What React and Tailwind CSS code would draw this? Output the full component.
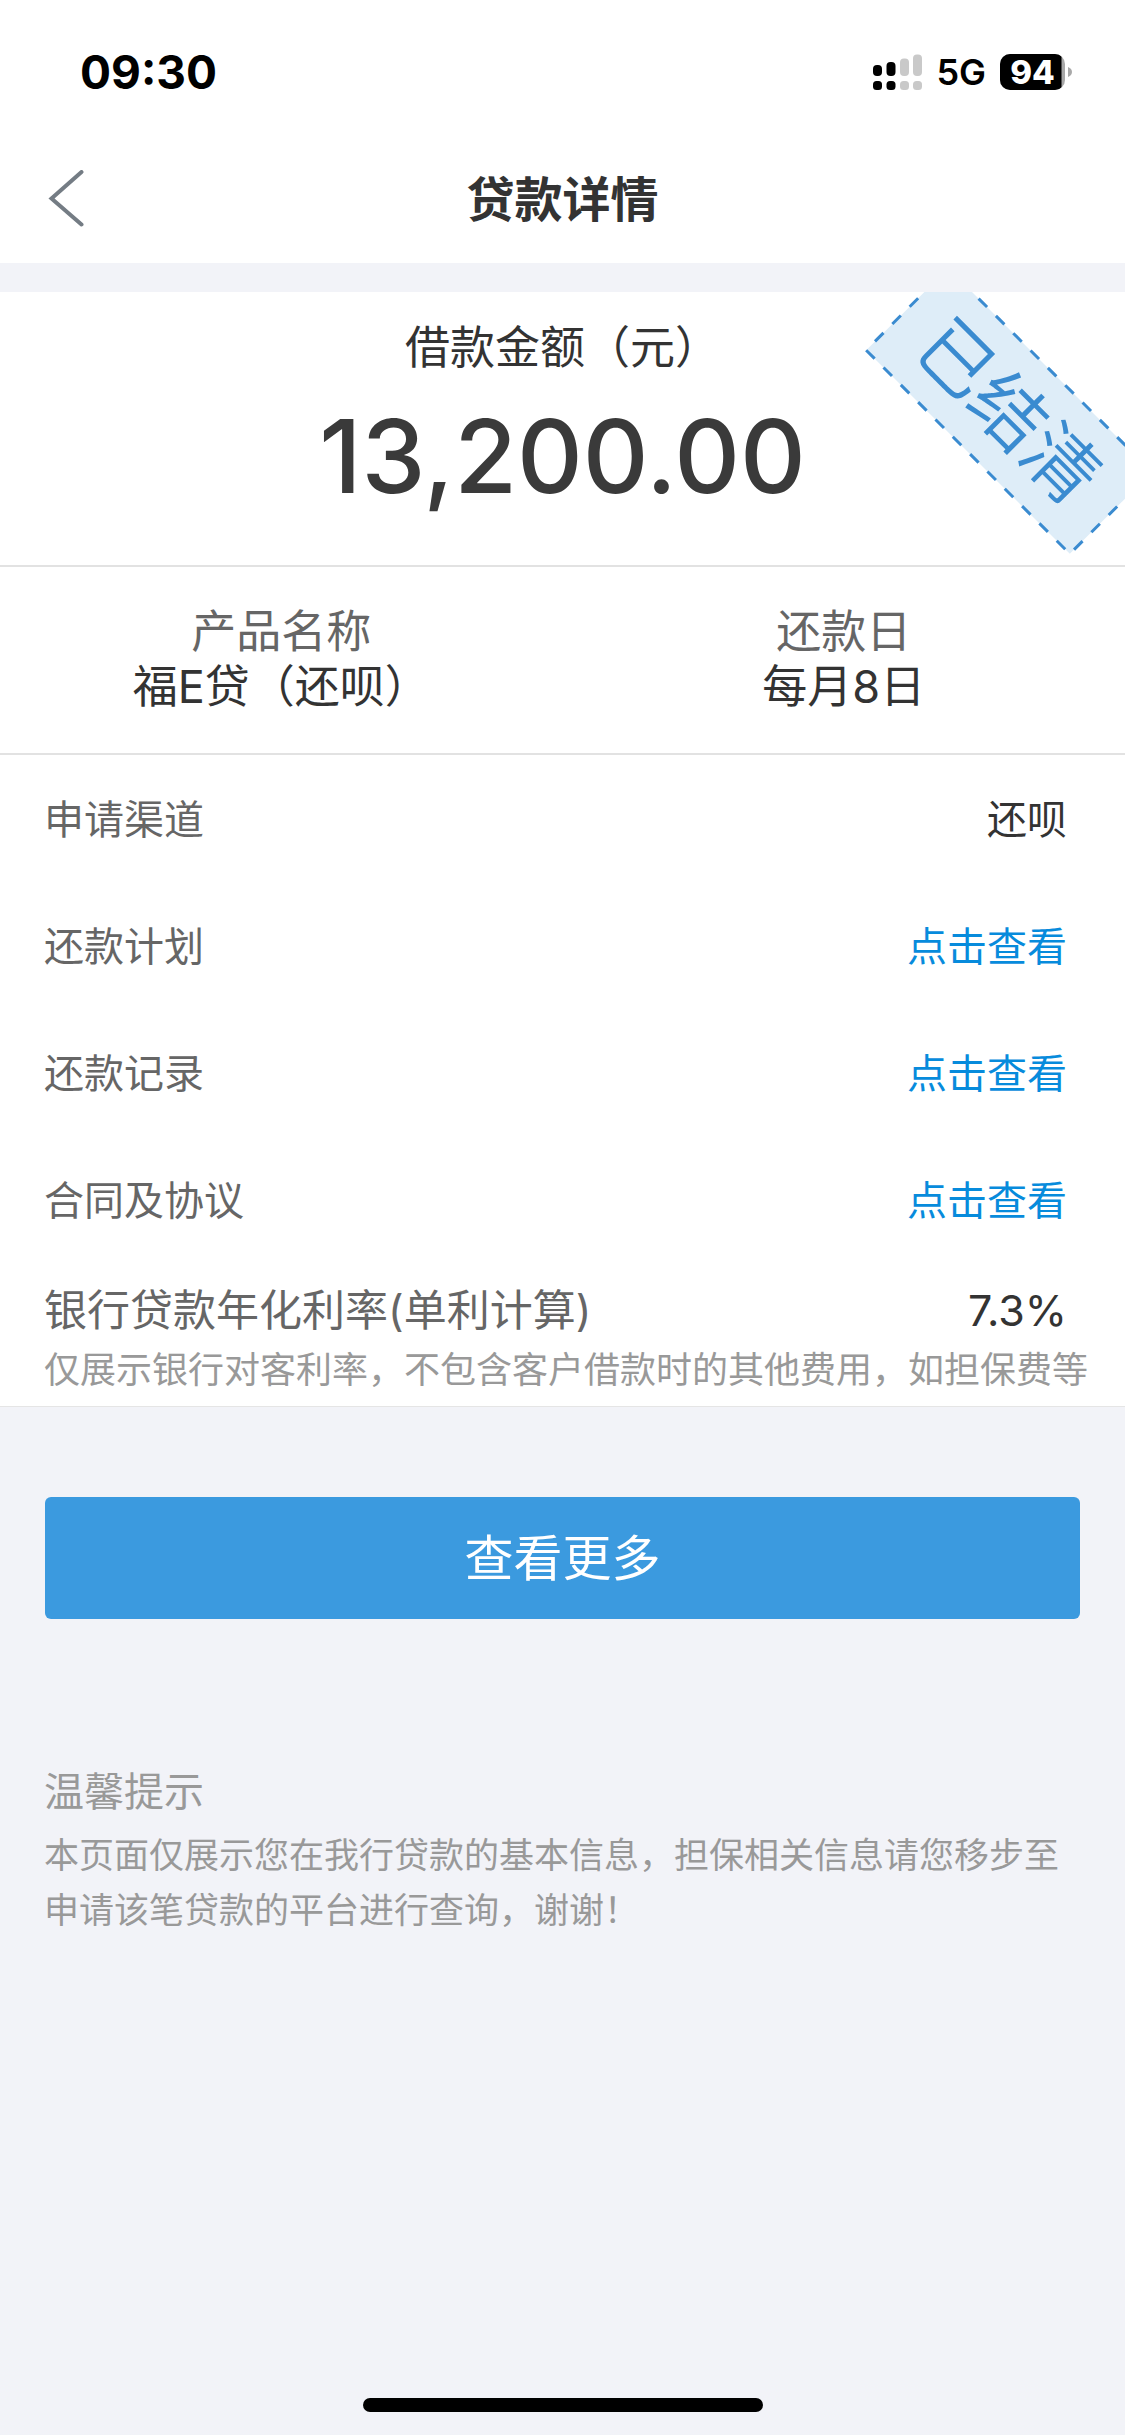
import React from "react";

const detalles = [
  { label: "申请渠道", value: "还呗" },
  { label: "还款计划", value: "点击查看", href: "#plan" },
  { label: "还款记录", value: "点击查看", href: "#records" },
  { label: "合同及协议", value: "点击查看", href: "#contracts" },
];

const SignalIcon = () => (
  <svg width="49" height="36" viewBox="0 0 49 36" aria-hidden="true">
    <g fill="#000">
      <rect x="0" y="11" width="9" height="11" rx="4" />
      <rect x="0" y="27" width="9" height="9" rx="3.5" />
      <rect x="13.5" y="8" width="9" height="14" rx="4" />
      <rect x="13.5" y="27" width="9" height="9" rx="3.5" />
    </g>
    <g fill="#c9c9c9">
      <rect x="27" y="4.5" width="9" height="17.5" rx="4" />
      <rect x="27" y="27" width="9" height="9" rx="3.5" />
      <rect x="40" y="0.5" width="9" height="21.5" rx="4" />
      <rect x="40" y="27" width="9" height="9" rx="3.5" />
    </g>
  </svg>
);

const Battery = () => (
  <div className="relative flex h-9 w-[72px] items-center">
    <svg className="absolute inset-0" width="72" height="36" viewBox="0 0 72 36" aria-hidden="true">
      <defs>
        <clipPath id="battery-body">
          <rect width="65" height="36" rx="10" />
        </clipPath>
      </defs>
      <g clipPath="url(#battery-body)">
        <rect width="65" height="36" fill="#a9a9a9" />
        <rect width="61.5" height="36" fill="#000" />
      </g>
      <path d="M68 13c2.6 1 4 2.900 4 5s-1.400 4-4 5z" fill="#a9a9a9" />
    </svg>
    <span className="relative w-[65px] text-center text-[33px] font-extrabold leading-9 text-white">94</span>
  </div>
);

const StatusBar = () => (
  <div className="flex h-[136px] items-center justify-between pt-2 pl-20 pr-[53px] text-black">
    <span className="text-[46px] font-bold leading-none">09:30</span>
    <div className="flex items-center">
      <SignalIcon />
      <span className="ml-[14px] mr-[14px] text-[36px] font-semibold leading-9">5G</span>
      <Battery />
    </div>
  </div>
);

const Stamp = () => (
  <div className="absolute top-[61px] -right-7 flex h-[116px] w-[288px] rotate-45 items-center justify-center bg-[#deedf8]">
    <svg className="absolute inset-0 h-full w-full overflow-visible" aria-hidden="true">
      <rect
        width="288"
        height="116"
        fill="none"
        stroke="#3a8bd0"
        strokeWidth="3"
        strokeDasharray="12 12.5"
        strokeDashoffset="6"
      />
    </svg>
    <span className="relative text-[74px] font-[350] leading-none text-[#3a8bd0]">已结清</span>
  </div>
);

const App = () => {
  return (
    <div
      lang="zh-CN"
      className="flex min-h-screen flex-col bg-[#f2f3f8] font-['Inter','Noto_Sans_CJK_SC',sans-serif] text-[#333333]"
    >
      <header className="bg-white">
        <StatusBar />
        <div className="grid h-[127px] grid-cols-[1fr_auto_1fr] items-center px-12">
          <button type="button" aria-label="返回" className="justify-self-start">
            <svg width="36" height="60" viewBox="0 0 36 60" fill="none" aria-hidden="true">
              <path
                d="M33.5 2L3.500 28.500L33.5 54.500"
                stroke="#747c84"
                strokeWidth="4"
                strokeLinecap="round"
              />
            </svg>
          </button>
          <h1 className="text-[48px] font-bold leading-none">贷款详情</h1>
        </div>
      </header>

      <main className="mt-[29px] flex-1">
        <section className="relative overflow-hidden border-b-2 border-[#e2e2e2] bg-white pt-[26px] pb-[53px] text-center">
          <p className="text-[45px] leading-[60px]">借款金额（元）</p>
          <p className="mt-[22px] text-[102px] font-medium leading-[112px] text-[#3a3a3a]">13,200.00</p>
          <Stamp />
        </section>

        <section className="grid grid-cols-2 border-b-2 border-[#e2e2e2] bg-white pt-[37px] pb-[39px] text-center text-[45px] leading-[55px]">
          <div>
            <p className="text-[#666666]">产品名称</p>
            <p>福E贷（还呗）</p>
          </div>
          <div>
            <p className="text-[#666666]">还款日</p>
            <p>每月8日</p>
          </div>
        </section>

        <section className="border-b border-[#e5e5e5] bg-white pt-px pb-[6px]">
          {detalles.map((d) => (
            <div key={d.label} className="flex h-[127px] items-center justify-between pl-11 pr-[58px] text-[40px]">
              <span className="text-[#666666]">{d.label}</span>
              {d.href ? (
                <a href={d.href} className="text-[#078bdc]">{d.value}</a>
              ) : (
                <span>{d.value}</span>
              )}
            </div>
          ))}
          <div className="flex items-center justify-between pt-4 pl-11 pr-[58px] text-[43px] leading-[60px]">
            <span className="text-[#666666]">银行贷款年化利率(单利计算)</span>
            <span>7.3%</span>
          </div>
          <p className="pl-11 text-[36px] leading-[60px] text-[#999999]">
            仅展示银行对客利率，不包含客户借款时的其他费用，如担保费等
          </p>
        </section>

        <div className="px-[45px] pt-[90px]">
          <button
            type="button"
            className="h-[122px] w-full rounded-md bg-[#3b9adf] text-[49px] leading-none text-white"
          >
            查看更多
          </button>
        </div>

        <section className="mt-[143px] px-11 text-[#999999]">
          <h2 className="text-[40px] leading-[60px]">温馨提示</h2>
          <p className="mt-[6px] text-[35px] leading-[55px]">
            本页面仅展示您在我行贷款的基本信息，担保相关信息请您移步至申请该笔贷款的平台进行查询，谢谢！
          </p>
        </section>
      </main>

      <footer className="flex justify-center pb-[23px]">
        <div className="h-[14px] w-[400px] rounded-full bg-black" />
      </footer>
    </div>
  );
};

export default App;
